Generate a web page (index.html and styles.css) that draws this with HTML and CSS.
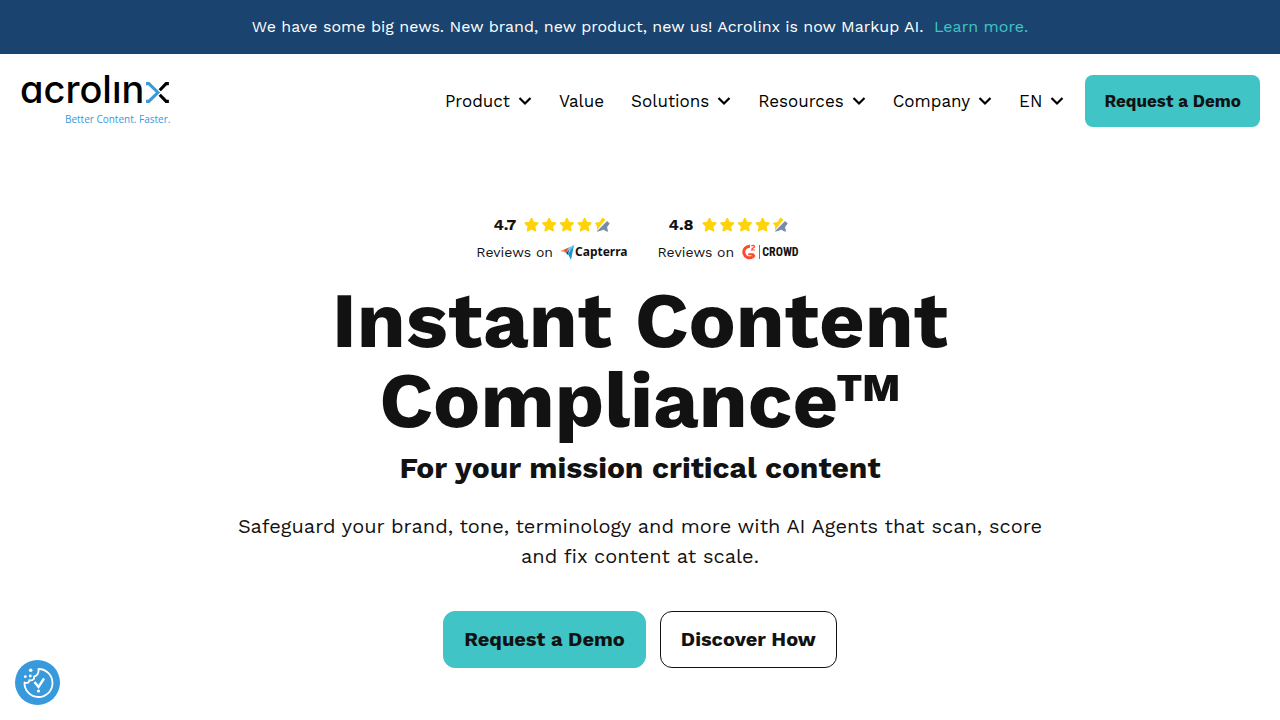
FILE: index.html
```html
<!DOCTYPE html>
<html lang="en">
<head>
  <meta charset="UTF-8" />
  <meta name="viewport" content="width=device-width, initial-scale=1.0"/>
  <title>Acrolinx</title>
  <link rel="stylesheet" href="styles.css">
</head>
<body>

  <svg class="sprite" aria-hidden="true">
    <symbol id="chevron" viewBox="0 0 14 10">
      <path d="M1.500 2l5.500 5.500L12.500 2" fill="none" stroke="currentColor" stroke-width="2.200"/>
    </symbol>
    <symbol id="stars" viewBox="0 0 86 16">
      <g fill="#ffd20a" stroke="#ffd20a" stroke-width="2" stroke-linejoin="round">
        <path id="star" d="M7.500 1.800L9.200 5.700 13.500 6.200 10.300 9.200 11.300 13.500 7.500 11.300 3.700 13.500 4.700 9.200 1.500 6.200 5.800 5.700z"/>
        <use href="#star" x="17.700"/>
        <use href="#star" x="35.400"/>
        <use href="#star" x="53.100"/>
      </g>
      <path d="M71.500 6.200l4.500-.7L78.500 1l2.400 1.600-7.600 9.700.4-3z" fill="#ffd20a" stroke="#ffd20a" stroke-linejoin="round"/>
      <path d="M73.500 14.200l9.600-9.700 2 2-2.500 3.500.8 4.300-4-2z" fill="#748aa8" stroke="#748aa8" stroke-linejoin="round"/>
    </symbol>
  </svg>

  <div class="announcement">
    We have some big news. New brand, new product, new us! Acrolinx is now Markup AI.
    <a href="#">Learn more.</a>
  </div>

  <header class="header">
    <a class="logo" href="#" aria-label="acrolinx">
      <span class="logo-name">acrolın<svg class="logo-x" viewBox="0 0 26 23" aria-hidden="true">
        <path d="M1 1.800h3L14 11.500 4 21.200H1" fill="none" stroke="#3899dc" stroke-width="3.400"/>
        <path d="M26 1.800h-3L16 9M16 14l7 7.200h3" fill="none" stroke="#000" stroke-width="3.400"/>
      </svg></span>
      <span class="logo-tagline">Better Content. Faster.</span>
    </a>

    <nav class="nav">
      <a href="#">Product <svg class="chevron"><use href="#chevron"/></svg></a>
      <a href="#">Value</a>
      <a href="#">Solutions <svg class="chevron"><use href="#chevron"/></svg></a>
      <a href="#">Resources <svg class="chevron"><use href="#chevron"/></svg></a>
      <a href="#">Company <svg class="chevron"><use href="#chevron"/></svg></a>
      <a href="#">EN <svg class="chevron"><use href="#chevron"/></svg></a>
    </nav>
    <button class="btn btn-small" type="button">Request a Demo</button>
  </header>

  <main class="hero">
    <div class="ratings">
      <div class="rating">
        <div class="score">4.7 <svg class="stars"><use href="#stars"/></svg></div>
        <div class="source">
          <span>Reviews on</span>
          <svg class="capterra-icon" viewBox="0 0 14 15" aria-hidden="true">
            <path d="M0 6l9-3.500-3 5z" fill="#ff9d28"/>
            <path d="M4 5l5-2.500L6 8z" fill="#e54747"/>
            <path d="M9 2.500L14 0l-3 5-5 3z" fill="#68c5ed"/>
            <path d="M14 0l-3 15-3-6z" fill="#1597d4"/>
            <path d="M6 8l3-3-1 5z" fill="#044d80"/>
          </svg>
          <span class="capterra">Capterra</span>
        </div>
      </div>
      <div class="rating">
        <div class="score">4.8 <svg class="stars"><use href="#stars"/></svg></div>
        <div class="source">
          <span>Reviews on</span>
          <svg class="g2-icon" viewBox="0 0 15 16" aria-hidden="true">
            <path d="M9 2.200A5.800 5.800 0 1 0 11.500 13" fill="none" stroke="#ff492c" stroke-width="3"/>
            <path d="M7.500 9.200h5L14.500 12l-2.200 2.500-2-3.300H7z" fill="#ff492c"/>
            <path d="M10.500 2.300c.7-1.500 3-1.200 3 .1 0 1.200-2.700 1.700-2.900 3.600h3.300" fill="none" stroke="#ff492c" stroke-width="1.200"/>
          </svg>
          <span class="crowd">CROWD</span>
        </div>
      </div>
    </div>

    <h1>Instant Content Compliance™</h1>
    <h2>For your mission critical content</h2>
    <p>Safeguard your brand, tone, terminology and more with AI Agents that scan, score and fix content at scale.</p>

    <div class="actions">
      <button class="btn" type="button">Request a Demo</button>
      <button class="btn btn-outline" type="button">Discover How</button>
    </div>
  </main>

  <button class="cookie-btn" type="button" aria-label="Cookie settings">
    <svg viewBox="0 0 45 45" aria-hidden="true">
      <path d="M23.500 9A14 14 0 1 1 9.500 22.500c3 1.200 5-.2 4.800-2.300 3.200.8 5.500-1 4.700-3.700 3-.3 5-3.200 4.500-7.500z" fill="none" stroke="#fff" stroke-width="1.800" stroke-linejoin="round"/>
      <path d="M19.500 22l4 5 5.500-8.500" fill="none" stroke="#fff" stroke-width="2.400"/>
      <g fill="#fff">
        <circle cx="23.500" cy="31" r="1.600"/>
        <circle cx="15.700" cy="10.300" r="1.800"/>
        <circle cx="10.300" cy="16.700" r="1.400"/>
        <circle cx="15.300" cy="16" r="1.400"/>
      </g>
    </svg>
  </button>

</body>
</html>
```
FILE: styles.css
```css
* {
  box-sizing: border-box;
}

body {
  margin: 0;
  font-family: "Work Sans", Inter, sans-serif;
  color: #121212;
  background: #fff;
}

a {
  color: inherit;
  text-decoration: none;
}

.sprite {
  position: absolute;
  width: 0;
  height: 0;
}

.announcement {
  padding: 15px 20px;
  background: #1a446f;
  color: #fff;
  font-size: 16px;
  line-height: 24px;
  text-align: center;
}

.announcement a {
  margin-left: 5px;
  color: #40c4c5;
}

.header {
  display: flex;
  align-items: center;
  padding: 21px 20px;
}

.logo {
  display: flex;
  flex-direction: column;
  align-items: flex-end;
  color: #000;
}

.logo-name {
  display: flex;
  align-items: baseline;
  font-family: Inter, sans-serif;
  font-size: 38px;
  font-weight: 500;
  line-height: 26px;
  font-feature-settings: "cv11";
}

.logo-x {
  width: 26px;
  height: 21px;
}

.logo-tagline {
  padding-top: 9px;
  color: #3899dc;
  font-family: "Open Sans", sans-serif;
  font-size: 10px;
  line-height: 14px;
}

.nav {
  display: flex;
  gap: 27px;
  margin-left: auto;
  margin-right: 21px;
  font-size: 17px;
  line-height: 24px;
}

.nav a {
  display: flex;
  align-items: center;
  gap: 8px;
  color: #000;
}

.chevron {
  width: 14px;
  height: 10px;
}

.btn {
  padding: 16px 20px;
  border: 1px solid #40c4c5;
  border-radius: 12px;
  background: #40c4c5;
  color: #121212;
  font-family: inherit;
  font-size: 20px;
  font-weight: 700;
  line-height: 23px;
  cursor: pointer;
}

.btn-small {
  padding: 15px 19px;
  border: 0;
  border-radius: 8px;
  font-size: 17px;
  line-height: 22px;
}

.btn-outline {
  border-color: #121212;
  background: #fff;
}

.hero {
  display: flex;
  flex-direction: column;
  align-items: center;
  max-width: 860px;
  margin: 0 auto;
  padding: 64px 20px 50px;
  text-align: center;
}

.ratings {
  display: flex;
  gap: 30px;
  margin-bottom: 14px;
  padding-right: 5px;
}

.rating {
  display: flex;
  flex-direction: column;
  align-items: center;
}

.score {
  display: flex;
  align-items: center;
  gap: 8px;
  font-size: 16px;
  font-weight: 700;
  line-height: 26px;
}

.stars {
  width: 86px;
  height: 16px;
}

.source {
  display: flex;
  align-items: center;
  gap: 7px;
  font-size: 14px;
  line-height: 28px;
}

.capterra-icon {
  width: 14px;
  height: 15px;
}

.capterra {
  margin-left: -6px;
  font-family: "Noto Sans", sans-serif;
  font-size: 12px;
  font-weight: 700;
}

.g2-icon {
  width: 15px;
  height: 16px;
}

.crowd {
  margin-left: -4px;
  padding-left: 2px;
  border-left: 1px solid #777;
  font-family: "Roboto Condensed", "Liberation Sans Narrow", sans-serif;
  font-size: 12px;
  font-weight: 700;
  line-height: 14px;
}

h1 {
  margin: 0;
  font-size: 79px;
  font-weight: 700;
  line-height: 80px;
}

h2 {
  margin: 8px 0 23px;
  font-size: 30px;
  font-weight: 700;
  line-height: 40px;
}

.hero p {
  margin: 0 0 40px;
  font-size: 20px;
  line-height: 30px;
}

.actions {
  display: flex;
  gap: 14px;
}

.cookie-btn {
  position: fixed;
  left: 15px;
  bottom: 15px;
  width: 45px;
  height: 45px;
  padding: 0;
  border: 0;
  border-radius: 50%;
  background: #3899dc;
  cursor: pointer;
}

.cookie-btn svg {
  display: block;
}
```
